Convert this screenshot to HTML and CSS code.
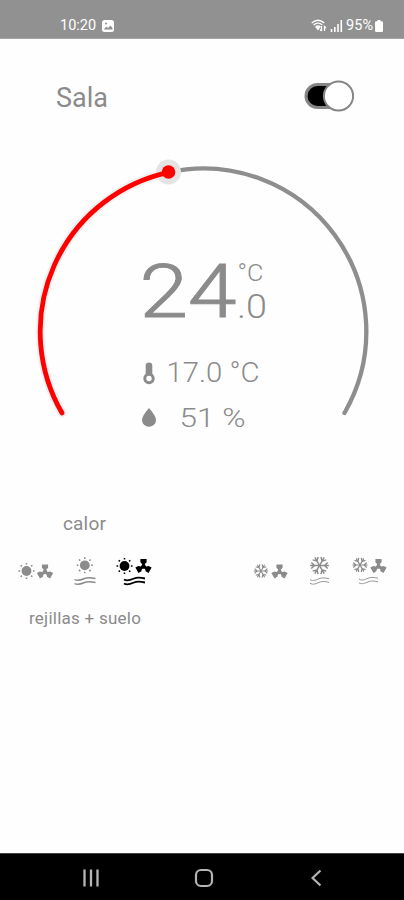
FILE: index.html
```html
<!DOCTYPE html>
<html lang="es">
<head>
<meta charset="utf-8">
<title>Sala</title>
<link rel="stylesheet" href="styles.css">
</head>
<body>
<svg class="defs" aria-hidden="true">
  <symbol id="sun" viewBox="-10 -10 20 20" overflow="visible">
    <circle r="4.9" fill="currentColor"/>
    <path d="M0-6.400V-8M0 6.400V8M6.400 0H8M-6.400 0H-8M4.600-4.600L5.800-5.800M-4.600-4.600L-5.800-5.800M4.600 4.600L5.800 5.800M-4.600 4.600L-5.800 5.800" stroke="currentColor" stroke-width="1.500"/>
  </symbol>
  <symbol id="fan" viewBox="-10 -10 20 20" overflow="visible">
    <g fill="currentColor">
      <circle r="2.200"/>
      <path id="blade" d="M-1.400 0V-2.600L-3.100-4.200V-7.600H3.100V-4.200L1.400-2.600V0Z"/>
      <use href="#blade" transform="rotate(120)"/>
      <use href="#blade" transform="rotate(240)"/>
    </g>
  </symbol>
  <symbol id="flake" viewBox="-10 -10 20 20" overflow="visible">
    <g fill="none" stroke="currentColor" stroke-width="1.300">
      <path id="arm" d="M-8.500 0H8.500M-7.500-2.800L-4.500 0L-7.500 2.800M7.500-2.800L4.500 0L7.500 2.800"/>
      <use href="#arm" transform="rotate(60)"/>
      <use href="#arm" transform="rotate(120)"/>
    </g>
  </symbol>
  <symbol id="waves" viewBox="0 0 22 8" overflow="visible">
    <path d="M.5 2.500C4 4.500 7 3 10.500 1.500S17 .5 21.500 1.500M.5 6.500C4 8.500 7 7 10.500 5.500S17 4.500 21.500 5.500" fill="none" stroke="currentColor"/>
  </symbol>
</svg>

<header class="status">
  <div class="status-left">
    <span>10:20</span>
    <svg width="12" height="12" viewBox="0 0 12 12"><rect width="12" height="12" rx="2.500" fill="#fff"/><path d="M2 9L4.500 6.500L6 8L8.500 5.500L10.500 8V9.500H2Z" fill="#919191"/><circle cx="4" cy="3.600" r="1" fill="#919191"/></svg>
  </div>
  <div class="status-right">
    <svg class="wifi" width="16" height="13" viewBox="0 0 16 13" fill="none" stroke="#fff" stroke-width="1.300"><path d="M.7 4Q7 -1.500 13.300 4M2.600 6Q7 2.300 11.400 6M4.600 8Q7 6 9.400 8"/><path d="M5.500 8.500L7 10.500L8.500 8.500Z" fill="#fff"/><path d="M10.500 7V12M9 10.500L10.500 12M13.500 12V7.500L15 9"/></svg>
    <svg class="signal" width="13" height="12" viewBox="0 0 13 12" stroke="#fff" stroke-width="1.600"><path d="M1.500 12V9M4.800 12V7M8 12V4"/><path d="M11.300 12V0"/></svg>
    <span>95%</span>
    <svg class="battery" width="8" height="12" viewBox="0 0 8 12" fill="#fff"><rect x="2.500" width="3" height="2"/><rect y="1.300" width="8" height="10.700" rx="1.300"/></svg>
  </div>
</header>

<main>
  <section class="room">
    <h1>Sala</h1>
    <svg class="toggle" width="50" height="32" viewBox="0 0 50 32"><rect x="2" y="4.500" width="36" height="23" rx="11.500" fill="#000" stroke="#858585" stroke-width="3"/><circle cx="34.500" cy="16" r="14.600" fill="#fff" stroke="#858585" stroke-width="2"/></svg>
  </section>

  <section class="dial">
    <svg class="arc" width="404" height="280" viewBox="0 150 404 280" fill="none" stroke-linecap="round">
      <path d="M168.500 172.300A163 163 0 0 1 344.500 413" stroke="#8e8e8e" stroke-width="4.300"/>
      <path d="M62 413A163 163 0 0 1 168.500 172.300" stroke="#000" stroke-opacity=".05" stroke-width="9"/>
      <circle cx="168.500" cy="172" r="12.500" fill="#e4e4e4"/>
      <path d="M62 413A163 163 0 0 1 168.500 172.300" stroke="#f00" stroke-width="4.800"/>
      <circle cx="168.500" cy="172" r="6.800" fill="#f00"/>
    </svg>
    <div class="readings">
      <svg class="target" width="140" height="112" viewBox="135 235 140 112">
        <text class="whole" x="139.500" y="317" font-size="75" textLength="97" lengthAdjust="spacingAndGlyphs">24</text>
        <text x="237.500" y="281" font-size="24" textLength="26" lengthAdjust="spacingAndGlyphs">°C</text>
        <text x="237" y="317.500" font-size="33" textLength="30" lengthAdjust="spacingAndGlyphs">.0</text>
      </svg>
      <svg class="reading" width="140" height="44" viewBox="135 351 140 44">
        <path d="M145.700 376V365.500Q145.700 362.500 149 362.500T152.300 365.500V376Z" fill="#8b8b8b"/><circle cx="149" cy="378.500" r="4.200" fill="#fff" stroke="#8b8b8b" stroke-width="3"/>
        <text x="166.500" y="382" font-size="27" textLength="93" lengthAdjust="spacingAndGlyphs">17.0 °C</text>
      </svg>
      <svg class="reading" width="140" height="44" viewBox="135 395 140 44">
        <path d="M149 408Q142 416 142 420A7 6.800 0 0 0 156 420Q156 416 149 408Z" fill="#8b8b8b"/>
        <text x="179.500" y="426.500" font-size="26" textLength="66" lengthAdjust="spacingAndGlyphs">51 %</text>
      </svg>
    </div>
  </section>

  <p class="mode-name">calor</p>
  <section class="modes">
    <div class="group">
      <svg viewBox="0 0 49 36"><use href="#sun" x="5.500" y="8" width="20" height="20"/><use href="#fan" x="24" y="9" width="20" height="20"/></svg>
      <svg viewBox="0 0 49 36"><use href="#sun" x="14.800" y="2.300" width="20" height="20"/><use href="#waves" x="14" y="24" width="22" height="8" stroke-width="1.400"/></svg>
      <svg class="active" viewBox="0 0 49 36"><use href="#sun" x="5.500" y="3" width="20" height="20"/><use href="#fan" x="24.500" y="3.500" width="20" height="20"/><use href="#waves" x="14.500" y="24" width="22" height="8"/></svg>
    </div>
    <div class="group">
      <svg viewBox="0 0 49 36"><use href="#flake" x="6.500" y="9.500" width="17" height="17"/><use href="#fan" x="23.500" y="9" width="20" height="20"/></svg>
      <svg viewBox="0 0 49 36"><use href="#flake" x="13.500" y="1.500" width="22" height="22"/><use href="#waves" x="14.500" y="24" width="20" height="8"/></svg>
      <svg viewBox="0 0 49 36"><use href="#flake" x="7" y="3" width="18" height="18"/><use href="#fan" x="24.500" y="3.500" width="20" height="20"/><use href="#waves" x="14.500" y="23.500" width="20" height="8"/></svg>
    </div>
  </section>
  <p class="outlet">rejillas + suelo</p>
</main>

<nav class="navbar">
  <svg width="18" height="18" viewBox="0 0 18 18"><path d="M2.500 .5V17.500M9 .5V17.500M15.500 .5V17.500" stroke="#b5b5b5" stroke-width="2.300"/></svg>
  <svg width="20" height="20" viewBox="0 0 20 20"><rect x="2" y="2" width="16" height="16" rx="5" fill="none" stroke="#b5b5b5" stroke-width="2.200"/></svg>
  <svg width="12" height="18" viewBox="0 0 12 18"><path d="M9.500 1.500L1.500 9L9.500 16.500" fill="none" stroke="#b5b5b5" stroke-width="2.200"/></svg>
</nav>
</body>
</html>
```
FILE: styles.css
```css
* { box-sizing: border-box; }
body {
  margin: 0;
  width: 404px;
  height: 900px;
  display: flex;
  flex-direction: column;
  overflow: hidden;
  background: #fefefe;
  color: #8b8b8b;
  font-family: Roboto, "Liberation Sans", sans-serif;
}
svg { display: block; flex: none; }
.defs { width: 0; height: 0; position: absolute; }

.status {
  height: 39px;
  padding: 11px 21px 0 60px;
  display: flex;
  justify-content: space-between;
  background: #919191;
  border-bottom: 1px solid #a5a5a5;
  color: #fff;
  font-size: 14.5px;
  line-height: 29px;
}
.status-left, .status-right { display: flex; align-items: center; height: 29px; }
.status-left { gap: 6px; }
.status-right { gap: 3px; }
.battery { margin-left: -1px; }

main { flex: 1; }
.room {
  height: 111px;
  padding: 41px 50px 0 56px;
  display: flex;
  justify-content: space-between;
}
h1 { margin: 0; font-size: 27px; line-height: 36px; font-weight: 400; }

.dial { display: grid; height: 280px; }
.arc, .readings { grid-area: 1 / 1; }
.readings { padding: 85px 0 0 135px; }
.target { margin-bottom: 4px; }
.readings text { fill: #8b8b8b; font-weight: 300; }
.readings .whole { stroke: #8b8b8b; stroke-width: 1; }

p { margin: 0; }
.mode-name { width: 169px; margin-top: 82px; text-align: center; font-size: 19px; line-height: 24px; letter-spacing: 0.2px; }
.modes { display: flex; justify-content: space-between; padding: 0 11px 0 10.5px; margin-top: 17px; }
.group { display: grid; grid-template-columns: repeat(3, 49px); }
.group svg { width: 49px; height: 36px; }
.active { color: #000; stroke-width: 1.8; }
.outlet { margin: 18px 0 0 29px; font-size: 17px; line-height: 22px; letter-spacing: 0.25px; }

.navbar {
  height: 47px;
  background: #000;
  border-top: 1px solid #444;
  display: flex;
  justify-content: space-between;
  align-items: center;
  padding: 2px 81px 0 82px;
}
.navbar svg:nth-child(2) { margin-right: 3px; }
```
